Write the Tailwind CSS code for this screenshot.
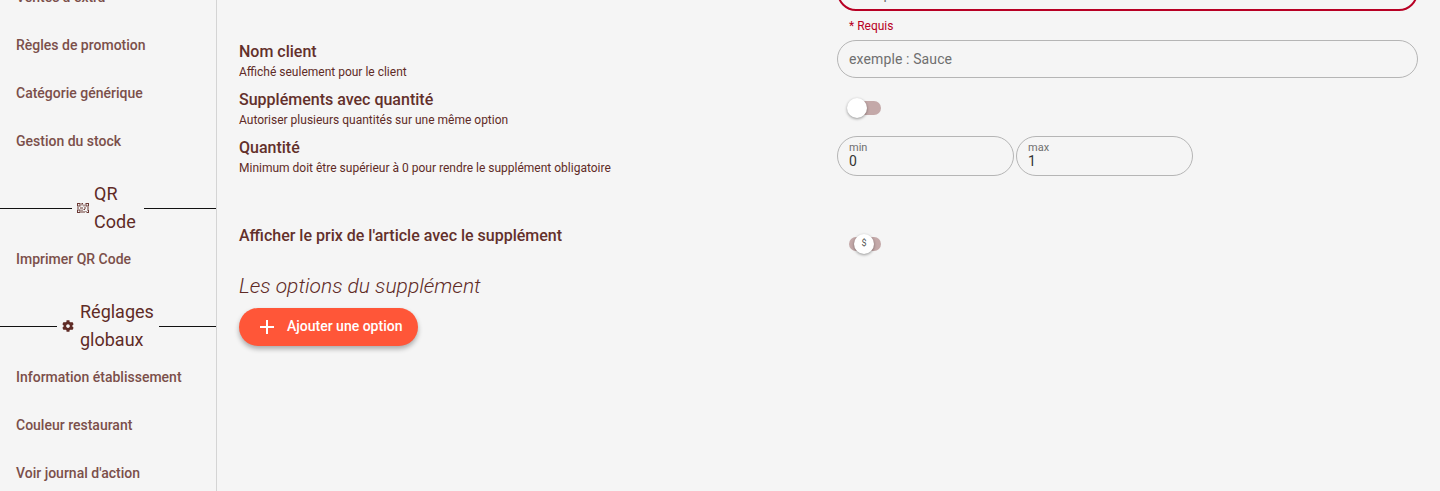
<!DOCTYPE html>
<html lang="fr">
<head>
  <meta charset="UTF-8" />
  <title>Supplément</title>
  <script src="https://cdn.jsdelivr.net/npm/@tailwindcss/browser@4"></script>
</head>
<body class="h-[491px] overflow-hidden bg-[#f5f5f5] font-['Roboto',sans-serif] text-[#5f2b26]">
  <div class="flex -mt-[27px] h-[518px]">
    <!-- sidebar -->
    <aside class="w-[217px] shrink-0 border-r border-[#d4d4d4] text-sm font-medium text-[#7b4f4a]">
      <a class="flex h-12 items-center pl-4">Ventes à extra</a>
      <a class="flex h-12 items-center pl-4">Règles de promotion</a>
      <a class="flex h-12 items-center pl-4">Catégorie générique</a>
      <a class="flex h-12 items-center pl-4">Gestion du stock</a>

      <div class="mt-[15px] -mb-px flex items-center text-lg font-normal leading-7 text-[#5f2b26]">
        <div class="h-px flex-1 bg-[#111]"></div>
        <div class="flex items-center gap-[5px] px-[5px]">
          <svg class="size-3" viewBox="0 0 12 12" fill="#6b3a35">
            <path d="M0 1h3.5v3.5H0zM1 2v1.5h1.5V2zM8.5 1H12v3.5H8.5zM9.5 2v1.5H11V2zM0 7.5h3.5V11H0zM1 8.5V10h1.5V8.5zM4.5 1H6v1H5.5v1.5h-1zM6.5 2.5h1v2h-1zM0 5.500h2v1H0zM3 5.500h3v1H3zM7 5.500h2v1H7zM10 5.500h2v1h-2zM4.500 7.500h1V11h-1zM6.500 7h1.500v1H6.500zM6.500 9h1v2h-1zM8.500 9h1v1h-1zM10 7.500h2v3.500H9.500V10H11V8.500h-1z" fill-rule="evenodd" />
          </svg>
          <span class="w-[45px]">QR Code</span>
        </div>
        <div class="h-px flex-1 bg-[#111]"></div>
      </div>

      <a class="flex h-12 items-center pl-4">Imprimer QR Code</a>

      <div class="mt-[15px] -mb-px flex items-center text-lg font-normal leading-7 text-[#5f2b26]">
        <div class="h-px flex-1 bg-[#111]"></div>
        <div class="flex items-center gap-[6px] px-[5px]">
          <svg class="size-3" viewBox="0 0 512 512" fill="#5f2b26">
            <path d="M487.4 315.7l-42.6-24.6c4.3-23.2 4.3-47 0-70.2l42.6-24.6c4.9-2.8 7.1-8.6 5.5-14-11.1-35.6-30-67.8-54.7-94.6-3.8-4.1-10-5.1-14.8-2.3L380.8 110c-17.9-15.4-38.5-27.3-60.8-35.1V25.8c0-5.6-3.9-10.5-9.4-11.7-36.7-8.2-74.3-7.8-109.2 0-5.5 1.2-9.4 6.1-9.4 11.7V75c-22.2 7.9-42.8 19.8-60.8 35.1L88.7 85.5c-4.9-2.8-11-1.9-14.8 2.3-24.7 26.7-43.6 58.9-54.7 94.6-1.7 5.4.6 11.2 5.5 14L67.3 221c-4.3 23.2-4.3 47 0 70.2l-42.6 24.6c-4.9 2.8-7.1 8.6-5.5 14 11.1 35.6 30 67.8 54.7 94.6 3.8 4.1 10 5.1 14.8 2.3l42.6-24.6c17.9 15.4 38.5 27.3 60.8 35.1v49.2c0 5.6 3.9 10.5 9.4 11.7 36.7 8.2 74.3 7.8 109.2 0 5.5-1.2 9.4-6.1 9.4-11.7v-49.2c22.2-7.9 42.8-19.8 60.8-35.1l42.6 24.6c4.9 2.8 11 1.9 14.8-2.3 24.7-26.7 43.6-58.9 54.7-94.6 1.5-5.5-.7-11.3-5.6-14.1zM256 336c-44.1 0-80-35.9-80-80s35.9-80 80-80 80 35.9 80 80-35.9 80-80 80z" />
          </svg>
          <span class="w-[74px]">Réglages globaux</span>
        </div>
        <div class="h-px flex-1 bg-[#111]"></div>
      </div>

      <a class="flex h-12 items-center pl-4">Information établissement</a>
      <a class="flex h-12 items-center pl-4">Couleur restaurant</a>
      <a class="flex h-12 items-center pl-4">Voir journal d'action</a>
    </aside>

    <!-- form -->
    <main class="flex-1 px-[22px]">
      <div class="ml-[598px]">
        <input class="block h-[38px] w-full rounded-[19px] border-2 border-[#b80024] px-[10px] pt-[3px] text-sm tracking-[0.12px] outline-none placeholder:text-[#6f6f6f]" placeholder="exemple : Sauce" />
        <p class="h-[28px] pl-3 pt-[7px] text-xs leading-4 text-[#b80024]">* Requis</p>
      </div>

      <div class="flex h-12">
        <div class="w-[598px]">
          <h3 class="pt-px font-medium leading-[23px] text-[#63302b]">Nom client</h3>
          <p class="text-xs leading-[18px]">Affiché seulement pour le client</p>
        </div>
        <input class="mt-px block h-[38px] flex-1 rounded-[19px] border border-[#b5b5b5] px-[11px] text-sm tracking-[0.12px] outline-none placeholder:text-[#6f6f6f]" placeholder="exemple : Sauce" />
      </div>

      <div class="flex h-12">
        <div class="w-[598px]">
          <h3 class="pt-px font-medium leading-[23px] text-[#63302b]">Suppléments avec quantité</h3>
          <p class="text-xs leading-[18px]">Autoriser plusieurs quantités sur une même option</p>
        </div>
        <div class="relative mt-[14px] ml-[12px] h-[14px] w-[32px] rounded-full bg-[#c4a9a9]">
          <span class="absolute -top-[3px] -left-[2px] size-5 rounded-full bg-white shadow-[0_1px_3px_rgba(0,0,0,0.4)]"></span>
        </div>
      </div>

      <div class="flex h-12">
        <div class="w-[598px]">
          <h3 class="pt-px font-medium leading-[23px] text-[#63302b]">Quantité</h3>
          <p class="text-xs leading-[18px]">Minimum doit être supérieur à 0 pour rendre le supplément obligatoire</p>
        </div>
        <div class="mt-px flex gap-[2px]">
          <div class="h-10 w-[177px] rounded-[20px] border border-[#b5b5b5] px-[11px] pt-[4px]">
            <div class="text-[11px] leading-[13px] text-[#6f6f6f]">min</div>
            <div class="text-sm leading-[15px] text-[#333]">0</div>
          </div>
          <div class="h-10 w-[177px] rounded-[20px] border border-[#b5b5b5] px-[11px] pt-[4px]">
            <div class="text-[11px] leading-[13px] text-[#6f6f6f]">max</div>
            <div class="text-sm leading-[15px] text-[#333]">1</div>
          </div>
        </div>
      </div>

      <div class="mt-10 flex h-6">
        <h3 class="w-[598px] pt-px font-medium leading-[23px] text-[#63302b]">Afficher le prix de l'article avec le supplément</h3>
        <div class="relative mt-[14px] ml-[12px] h-[14px] w-[32px] rounded-full bg-[#c4a9a9]">
          <span class="absolute -top-[3px] left-[5px] flex size-5 items-center justify-center rounded-full bg-white text-[9px] text-[#555] shadow-[0_1px_3px_rgba(0,0,0,0.4)]">$</span>
        </div>
      </div>

      <h2 class="mt-[25px] text-[21px] font-light italic leading-7">Les options du supplément</h2>
      <button class="mt-2 flex h-[38px] w-[179px] items-center rounded-[19px] bg-[#ff5638] pl-5 text-sm font-medium text-white shadow-[0_3px_5px_rgba(0,0,0,0.3)]">
        <svg class="size-4" viewBox="0 0 16 16" fill="none" stroke="white" stroke-width="2"><path d="M8 1v14M1 8h14" /></svg>
        <span class="ml-3 pb-[2px]">Ajouter une option</span>
      </button>
    </main>
  </div>
</body>
</html>
